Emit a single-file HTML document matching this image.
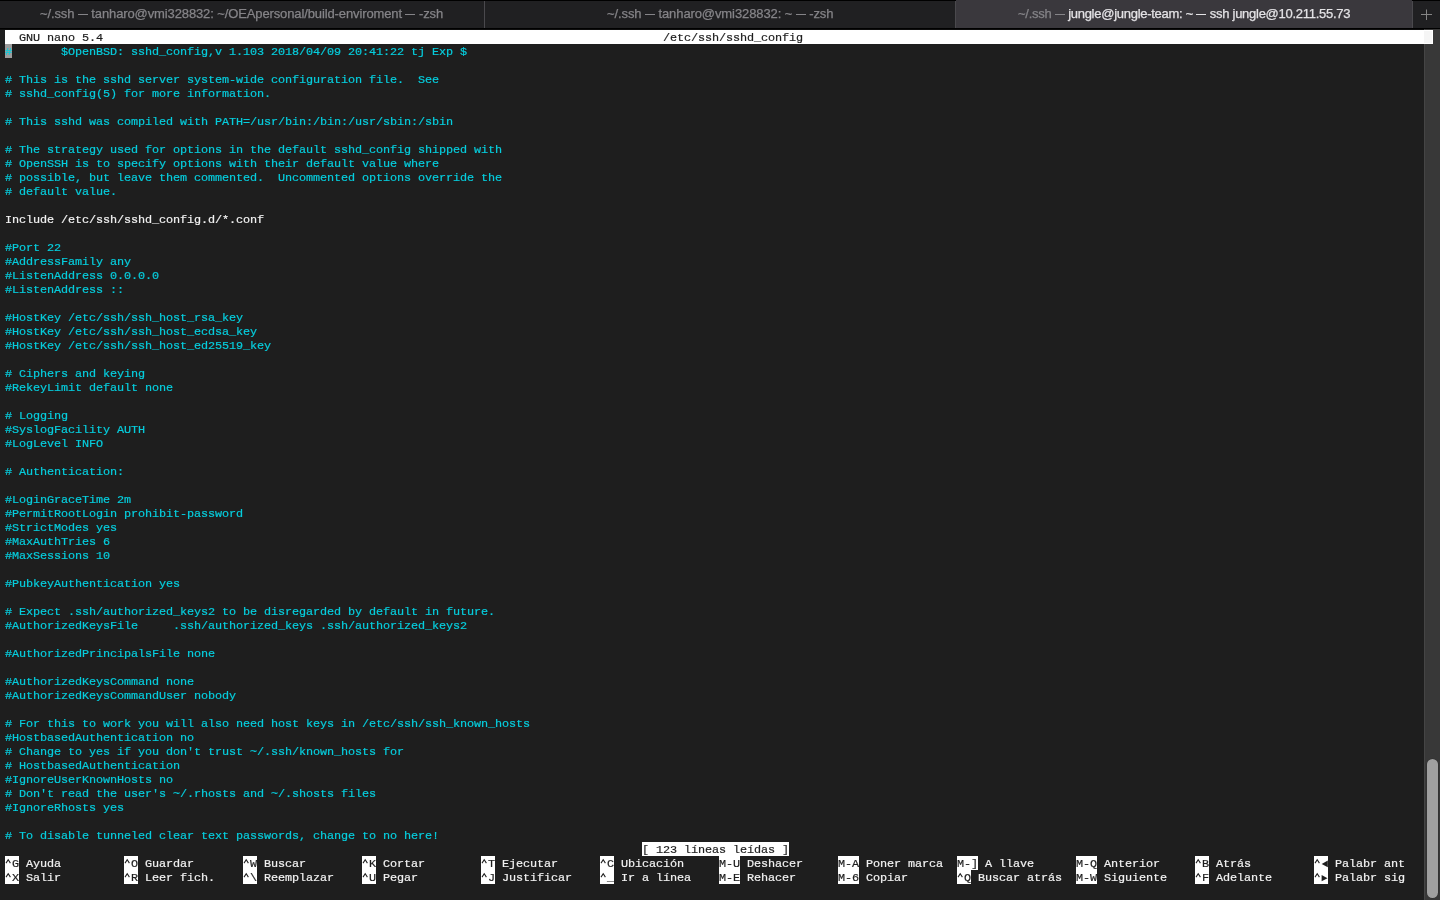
<!DOCTYPE html>
<html><head><meta charset="utf-8">
<style>
html,body{margin:0;padding:0;}
body{will-change:transform;width:1440px;height:900px;overflow:hidden;background:#1e1e1e;position:relative;font-family:"Liberation Mono",monospace;}
#tabs{position:absolute;left:0;top:0;width:1440px;height:28px;background:#000;}
.tab{position:absolute;top:1px;height:27px;background:#202022;}
.tt{position:absolute;top:1px;height:27px;color:#858488;font-family:"Liberation Sans",sans-serif;font-size:13px;line-height:25px;white-space:pre;-webkit-text-stroke:0.25px #858488;}
.tt.act{color:#e4e3e6;-webkit-text-stroke:0.25px #e4e3e6;}
.tt.act span{-webkit-text-stroke:0.25px #858488;}
.d{display:inline-block;width:10px;height:1px;background:currentColor;vertical-align:3px;}
.tab.act{top:0;height:28px;background:#3a383d;}
.sep{position:absolute;top:1px;height:27px;width:1px;background:#4a494d;}
#blk{position:absolute;left:0;top:28px;width:1440px;height:1px;background:#000;border-bottom:1px solid #0e0e0e;}
#term{position:absolute;left:0;top:30px;width:1440px;height:870px;background:#1e1e1e;}
.r,.inv2,.key{font-size:11.8px;letter-spacing:-0.08px;}
.r{position:absolute;left:5px;height:14px;line-height:14px;padding-top:1px;box-sizing:border-box;white-space:pre;}
.c{color:#06cddd;-webkit-text-stroke:0.2px #06cddd;}
.w{color:#f2f2f2;-webkit-text-stroke:0.2px #f2f2f2;}
.inv{background:#fff;color:#1e1e1e;-webkit-text-stroke:0.2px #1e1e1e;}
.inv .t{position:absolute;top:1px;}
.inv2{position:absolute;height:14px;line-height:14px;padding-top:1px;box-sizing:border-box;white-space:pre;background:#fff;color:#1e1e1e;-webkit-text-stroke:0.2px #1e1e1e;}
.key{position:absolute;height:14px;line-height:14px;padding-top:1px;box-sizing:border-box;white-space:pre;background:#fff;color:#1e1e1e;-webkit-text-stroke:0.2px #1e1e1e;}
.cur{position:absolute;width:7px;height:14px;background:#9c9c9c;}
#sb{position:absolute;left:1424px;top:29px;width:16px;height:871px;background:#383838;border-left:1px solid #454545;box-sizing:border-box;}
#thumb{position:absolute;left:1427px;top:759px;width:11px;height:139px;border-radius:5.5px;background:#a0a0a0;box-shadow:0 0 0 0.6px rgba(0,0,0,0.18);}
#sbov{position:absolute;left:1424px;top:31px;width:8px;height:12px;background:rgba(0,0,0,0.04);}
#plus{position:absolute;left:1413px;top:1px;width:27px;height:27px;background:#202022;}
</style></head><body>
<div id="tabs">
<div class="tab" style="left:0;width:484px"></div>
<div class="sep" style="left:484px"></div>
<div class="tab" style="left:485px;width:470px"></div>
<div class="sep" style="left:955px"></div>
<div class="tab act" style="left:956px;width:456px"></div>
<div class="sep" style="left:1412px"></div>
<div class="tt" style="left:40px;letter-spacing:-0.117px">~/.ssh <span class="d"></span> tanharo@vmi328832: ~/OEApersonal/build-enviroment <span class="d"></span> -zsh</div>
<div class="tt" style="left:607px;letter-spacing:-0.1px">~/.ssh <span class="d"></span> tanharo@vmi328832: ~ <span class="d"></span> -zsh</div>
<div class="tt act" style="left:1018px;letter-spacing:-0.27px"><span style="color:#858488">~/.ssh <span class="d"></span> </span>jungle@jungle-team: ~ <span class="d"></span> ssh jungle@10.211.55.73</div>
<div id="plus"><svg width="27" height="27" viewBox="0 0 27 27"><path d="M13.5 8.5V19M8 13.5H19" stroke="#858585" stroke-width="1"/></svg></div>
</div>
<div id="blk"></div>
<div id="term">
</div>
<div id="sb"></div>
<div id="thumb"></div>
<div class="r inv" style="top:30px;left:5px;width:1428px"><span class="t" style="left:14px">GNU nano 5.4</span><span class="t" style="left:658px">/etc/ssh/sshd_config</span></div>
<div class="cur" style="top:44px;left:5px"></div>
<div class="r c" style="top:44px">#       $OpenBSD: sshd_config,v 1.103 2018/04/09 20:41:22 tj Exp $</div>
<div class="r c" style="top:72px"># This is the sshd server system-wide configuration file.  See</div>
<div class="r c" style="top:86px"># sshd_config(5) for more information.</div>
<div class="r c" style="top:114px"># This sshd was compiled with PATH=/usr/bin:/bin:/usr/sbin:/sbin</div>
<div class="r c" style="top:142px"># The strategy used for options in the default sshd_config shipped with</div>
<div class="r c" style="top:156px"># OpenSSH is to specify options with their default value where</div>
<div class="r c" style="top:170px"># possible, but leave them commented.  Uncommented options override the</div>
<div class="r c" style="top:184px"># default value.</div>
<div class="r w" style="top:212px">Include /etc/ssh/sshd_config.d/*.conf</div>
<div class="r c" style="top:240px">#Port 22</div>
<div class="r c" style="top:254px">#AddressFamily any</div>
<div class="r c" style="top:268px">#ListenAddress 0.0.0.0</div>
<div class="r c" style="top:282px">#ListenAddress ::</div>
<div class="r c" style="top:310px">#HostKey /etc/ssh/ssh_host_rsa_key</div>
<div class="r c" style="top:324px">#HostKey /etc/ssh/ssh_host_ecdsa_key</div>
<div class="r c" style="top:338px">#HostKey /etc/ssh/ssh_host_ed25519_key</div>
<div class="r c" style="top:366px"># Ciphers and keying</div>
<div class="r c" style="top:380px">#RekeyLimit default none</div>
<div class="r c" style="top:408px"># Logging</div>
<div class="r c" style="top:422px">#SyslogFacility AUTH</div>
<div class="r c" style="top:436px">#LogLevel INFO</div>
<div class="r c" style="top:464px"># Authentication:</div>
<div class="r c" style="top:492px">#LoginGraceTime 2m</div>
<div class="r c" style="top:506px">#PermitRootLogin prohibit-password</div>
<div class="r c" style="top:520px">#StrictModes yes</div>
<div class="r c" style="top:534px">#MaxAuthTries 6</div>
<div class="r c" style="top:548px">#MaxSessions 10</div>
<div class="r c" style="top:576px">#PubkeyAuthentication yes</div>
<div class="r c" style="top:604px"># Expect .ssh/authorized_keys2 to be disregarded by default in future.</div>
<div class="r c" style="top:618px">#AuthorizedKeysFile     .ssh/authorized_keys .ssh/authorized_keys2</div>
<div class="r c" style="top:646px">#AuthorizedPrincipalsFile none</div>
<div class="r c" style="top:674px">#AuthorizedKeysCommand none</div>
<div class="r c" style="top:688px">#AuthorizedKeysCommandUser nobody</div>
<div class="r c" style="top:716px"># For this to work you will also need host keys in /etc/ssh/ssh_known_hosts</div>
<div class="r c" style="top:730px">#HostbasedAuthentication no</div>
<div class="r c" style="top:744px"># Change to yes if you don&#x27;t trust ~/.ssh/known_hosts for</div>
<div class="r c" style="top:758px"># HostbasedAuthentication</div>
<div class="r c" style="top:772px">#IgnoreUserKnownHosts no</div>
<div class="r c" style="top:786px"># Don&#x27;t read the user&#x27;s ~/.rhosts and ~/.shosts files</div>
<div class="r c" style="top:800px">#IgnoreRhosts yes</div>
<div class="r c" style="top:828px"># To disable tunneled clear text passwords, change to no here!</div>
<div class="inv2" style="top:842px;left:642px;width:147px">[ 123 líneas leídas ]</div>
<div class="key" style="top:856px;left:5px;width:14px"> G<svg style="position:absolute;left:0;top:0" width="7" height="14" viewBox="0 0 7 14"><path d="M1.0 7.1L3.2 3.8 5.4 7.1" fill="none" stroke="#1e1e1e" stroke-width="1.05"/></svg></div>
<div class="r w" style="top:856px;left:26px">Ayuda</div>
<div class="key" style="top:856px;left:124px;width:14px"> O<svg style="position:absolute;left:0;top:0" width="7" height="14" viewBox="0 0 7 14"><path d="M1.0 7.1L3.2 3.8 5.4 7.1" fill="none" stroke="#1e1e1e" stroke-width="1.05"/></svg></div>
<div class="r w" style="top:856px;left:145px">Guardar</div>
<div class="key" style="top:856px;left:243px;width:14px"> W<svg style="position:absolute;left:0;top:0" width="7" height="14" viewBox="0 0 7 14"><path d="M1.0 7.1L3.2 3.8 5.4 7.1" fill="none" stroke="#1e1e1e" stroke-width="1.05"/></svg></div>
<div class="r w" style="top:856px;left:264px">Buscar</div>
<div class="key" style="top:856px;left:362px;width:14px"> K<svg style="position:absolute;left:0;top:0" width="7" height="14" viewBox="0 0 7 14"><path d="M1.0 7.1L3.2 3.8 5.4 7.1" fill="none" stroke="#1e1e1e" stroke-width="1.05"/></svg></div>
<div class="r w" style="top:856px;left:383px">Cortar</div>
<div class="key" style="top:856px;left:481px;width:14px"> T<svg style="position:absolute;left:0;top:0" width="7" height="14" viewBox="0 0 7 14"><path d="M1.0 7.1L3.2 3.8 5.4 7.1" fill="none" stroke="#1e1e1e" stroke-width="1.05"/></svg></div>
<div class="r w" style="top:856px;left:502px">Ejecutar</div>
<div class="key" style="top:856px;left:600px;width:14px"> C<svg style="position:absolute;left:0;top:0" width="7" height="14" viewBox="0 0 7 14"><path d="M1.0 7.1L3.2 3.8 5.4 7.1" fill="none" stroke="#1e1e1e" stroke-width="1.05"/></svg></div>
<div class="r w" style="top:856px;left:621px">Ubicación</div>
<div class="key" style="top:856px;left:719px;width:21px">M-U</div>
<div class="r w" style="top:856px;left:747px">Deshacer</div>
<div class="key" style="top:856px;left:838px;width:21px">M-A</div>
<div class="r w" style="top:856px;left:866px">Poner marca</div>
<div class="key" style="top:856px;left:957px;width:21px">M-]</div>
<div class="r w" style="top:856px;left:985px">A llave</div>
<div class="key" style="top:856px;left:1076px;width:21px">M-Q</div>
<div class="r w" style="top:856px;left:1104px">Anterior</div>
<div class="key" style="top:856px;left:1195px;width:14px"> B<svg style="position:absolute;left:0;top:0" width="7" height="14" viewBox="0 0 7 14"><path d="M1.0 7.1L3.2 3.8 5.4 7.1" fill="none" stroke="#1e1e1e" stroke-width="1.05"/></svg></div>
<div class="r w" style="top:856px;left:1216px">Atrás</div>
<div class="key" style="top:856px;left:1314px;width:14px"><svg style="position:absolute;left:0;top:0" width="7" height="14" viewBox="0 0 7 14"><path d="M1.0 7.1L3.2 3.8 5.4 7.1" fill="none" stroke="#1e1e1e" stroke-width="1.05"/></svg><svg style="position:absolute;left:7px;top:0" width="7" height="14" viewBox="0 0 7 14"><path d="M0.7 7.9L6.8 4.6V11.2Z" fill="#1e1e1e"/></svg></div>
<div class="r w" style="top:856px;left:1335px">Palabr ant</div>
<div class="key" style="top:870px;left:5px;width:14px"> X<svg style="position:absolute;left:0;top:0" width="7" height="14" viewBox="0 0 7 14"><path d="M1.0 7.1L3.2 3.8 5.4 7.1" fill="none" stroke="#1e1e1e" stroke-width="1.05"/></svg></div>
<div class="r w" style="top:870px;left:26px">Salir</div>
<div class="key" style="top:870px;left:124px;width:14px"> R<svg style="position:absolute;left:0;top:0" width="7" height="14" viewBox="0 0 7 14"><path d="M1.0 7.1L3.2 3.8 5.4 7.1" fill="none" stroke="#1e1e1e" stroke-width="1.05"/></svg></div>
<div class="r w" style="top:870px;left:145px">Leer fich.</div>
<div class="key" style="top:870px;left:243px;width:14px"> \<svg style="position:absolute;left:0;top:0" width="7" height="14" viewBox="0 0 7 14"><path d="M1.0 7.1L3.2 3.8 5.4 7.1" fill="none" stroke="#1e1e1e" stroke-width="1.05"/></svg></div>
<div class="r w" style="top:870px;left:264px">Reemplazar</div>
<div class="key" style="top:870px;left:362px;width:14px"> U<svg style="position:absolute;left:0;top:0" width="7" height="14" viewBox="0 0 7 14"><path d="M1.0 7.1L3.2 3.8 5.4 7.1" fill="none" stroke="#1e1e1e" stroke-width="1.05"/></svg></div>
<div class="r w" style="top:870px;left:383px">Pegar</div>
<div class="key" style="top:870px;left:481px;width:14px"> J<svg style="position:absolute;left:0;top:0" width="7" height="14" viewBox="0 0 7 14"><path d="M1.0 7.1L3.2 3.8 5.4 7.1" fill="none" stroke="#1e1e1e" stroke-width="1.05"/></svg></div>
<div class="r w" style="top:870px;left:502px">Justificar</div>
<div class="key" style="top:870px;left:600px;width:14px"> _<svg style="position:absolute;left:0;top:0" width="7" height="14" viewBox="0 0 7 14"><path d="M1.0 7.1L3.2 3.8 5.4 7.1" fill="none" stroke="#1e1e1e" stroke-width="1.05"/></svg></div>
<div class="r w" style="top:870px;left:621px">Ir a línea</div>
<div class="key" style="top:870px;left:719px;width:21px">M-E</div>
<div class="r w" style="top:870px;left:747px">Rehacer</div>
<div class="key" style="top:870px;left:838px;width:21px">M-6</div>
<div class="r w" style="top:870px;left:866px">Copiar</div>
<div class="key" style="top:870px;left:957px;width:14px"> Q<svg style="position:absolute;left:0;top:0" width="7" height="14" viewBox="0 0 7 14"><path d="M1.0 7.1L3.2 3.8 5.4 7.1" fill="none" stroke="#1e1e1e" stroke-width="1.05"/></svg></div>
<div class="r w" style="top:870px;left:978px">Buscar atrás</div>
<div class="key" style="top:870px;left:1076px;width:21px">M-W</div>
<div class="r w" style="top:870px;left:1104px">Siguiente</div>
<div class="key" style="top:870px;left:1195px;width:14px"> F<svg style="position:absolute;left:0;top:0" width="7" height="14" viewBox="0 0 7 14"><path d="M1.0 7.1L3.2 3.8 5.4 7.1" fill="none" stroke="#1e1e1e" stroke-width="1.05"/></svg></div>
<div class="r w" style="top:870px;left:1216px">Adelante</div>
<div class="key" style="top:870px;left:1314px;width:14px"><svg style="position:absolute;left:0;top:0" width="7" height="14" viewBox="0 0 7 14"><path d="M1.0 7.1L3.2 3.8 5.4 7.1" fill="none" stroke="#1e1e1e" stroke-width="1.05"/></svg><svg style="position:absolute;left:7px;top:0" width="7" height="14" viewBox="0 0 7 14"><path d="M0.6 5.1L6.5 8.2 0.6 11.3Z" fill="#1e1e1e"/></svg></div>
<div class="r w" style="top:870px;left:1335px">Palabr sig</div>
<div id="sbov"></div>
</body></html>
